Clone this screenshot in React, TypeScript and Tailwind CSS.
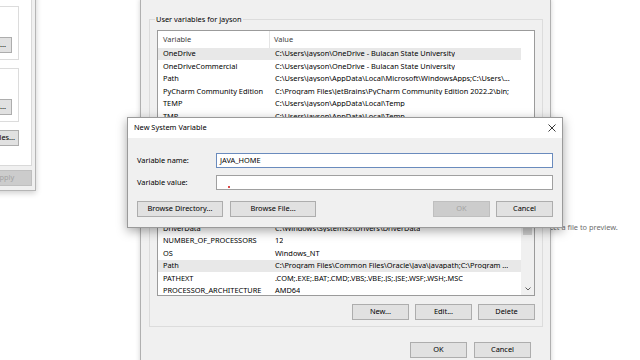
import { FC, ReactNode } from "react";
import clsx from "clsx";

type Row = [string, string];

const userRows: Row[] = [
  ["OneDrive", "C:\\Users\\jayson\\OneDrive - Bulacan State University"],
  ["OneDriveCommercial", "C:\\Users\\jayson\\OneDrive - Bulacan State University"],
  ["Path", "C:\\Users\\jayson\\AppData\\Local\\Microsoft\\WindowsApps;C:\\Users\\..."],
  ["PyCharm Community Edition", "C:\\Program Files\\JetBrains\\PyCharm Community Edition 2022.2\\bin;"],
  ["TEMP", "C:\\Users\\jayson\\AppData\\Local\\Temp"],
  ["TMP", "C:\\Users\\jayson\\AppData\\Local\\Temp"],
];

const systemRows: Row[] = [
  ["ComSpec", "C:\\Windows\\system32\\cmd.exe"],
  ["DriverData", "C:\\Windows\\System32\\Drivers\\DriverData"],
  ["NUMBER_OF_PROCESSORS", "12"],
  ["OS", "Windows_NT"],
  ["Path", "C:\\Program Files\\Common Files\\Oracle\\Java\\javapath;C:\\Program ..."],
  ["PATHEXT", ".COM;.EXE;.BAT;.CMD;.VBS;.VBE;.JS;.JSE;.WSF;.WSH;.MSC"],
  ["PROCESSOR_ARCHITECTURE", "AMD64"],
];

const Btn: FC<{ children: ReactNode; className?: string; disabled?: boolean }> = ({
  children,
  className,
  disabled,
}) => (
  <button
    type="button"
    className={clsx(
      "flex h-[16px] shrink-0 items-center justify-center border leading-none whitespace-nowrap",
      disabled
        ? "border-[#bfbfbf] bg-[#cccccc] text-[#a3a3a3]"
        : "border-[#adadad] bg-[#e1e1e1] text-black",
      className
    )}
  >
    {children}
  </button>
);

const Scrollbar = () => (
  <div className="flex w-[13px] shrink-0 flex-col bg-[#f0f0f0]">
    <div className="h-[13px] shrink-0" />
    <div className="mx-[2px] h-[29px] shrink-0 bg-[#cdcdcd]" />
    <div className="flex-1" />
    <div className="flex h-[13px] shrink-0 items-center justify-center">
      <svg width="6" height="4" viewBox="0 0 6 4">
        <path d="M0.5 0.5 L3 3 L5.5 0.5" fill="none" stroke="#606060" strokeWidth="1" />
      </svg>
    </div>
  </div>
);

const VarList: FC<{ rows: Row[]; selected: number; height: string; scroll?: boolean }> = ({
  rows,
  selected,
  height,
  scroll,
}) => (
  <div className={clsx("flex overflow-hidden border border-[#9b9b9b] bg-white", height)}>
    <div className="flex min-w-0 flex-1 flex-col">
      <div className="flex h-[16.5px] shrink-0 items-stretch text-[#3c3c3c]">
        <div className="flex w-[112px] shrink-0 items-center border-r border-[#e5e5e5] pl-[5px]">
          Variable
        </div>
        <div className="flex items-center pl-[4px]">Value</div>
      </div>
      {rows.map(([k, v], i) => (
        <div
          key={k + i}
          className={clsx(
            "flex h-[12.5px] shrink-0 items-center whitespace-nowrap leading-none",
            i === selected && "bg-[#e8e8e8]"
          )}
        >
          <div className="w-[112px] shrink-0 pl-[5px]">{k}</div>
          <div className="overflow-hidden pl-[5px]">{v}</div>
        </div>
      ))}
    </div>
    {scroll ? <Scrollbar /> : <div className="w-[13px] shrink-0" />}
  </div>
);

const Group: FC<{ title: string; className?: string; children: ReactNode }> = ({
  title,
  className,
  children,
}) => (
  <fieldset className={clsx("border border-[#dcdcdc]", className)}>
    <legend className="ml-[5px] px-[1px] leading-[10px]">{title}</legend>
    <div className="px-[7px] pt-[6px] pb-[6px]">{children}</div>
  </fieldset>
);

export default function App() {
  return (
    <div className="relative h-[360px] w-[640px] overflow-hidden bg-white font-['Noto_Sans','Open_Sans',sans-serif] text-[7.4px] text-black">
      {/* explorer preview text behind everything */}
      <div className="absolute left-[539px] top-[222px] whitespace-nowrap leading-[10px] text-[#6d6d6d]">
        Select a file to preview.
      </div>

      {/* System Properties window, mostly off screen */}
      <div className="absolute left-[-164px] top-[-60px] flex h-[251px] w-[200px] flex-col items-end border border-[#b5b5b5] bg-[#f0f0f0] pb-[4px] pr-[3px] shadow-[0_2px_6px_rgba(0,0,0,0.2)]">
        <div className="flex w-[180px] flex-1 flex-col items-end justify-end border border-[#d9d9d9] bg-white pb-[19px] pr-[12px]">
          <div className="h-[20px] w-[150px] border border-[#dcdcdc]" />
          <div className="mt-[7px] flex h-[54px] w-[150px] flex-col items-end justify-end border border-[#dcdcdc] pb-[6px] pr-[6px]">
            <Btn className="w-[46px]">Settings...</Btn>
          </div>
          <div className="mt-[8px] flex h-[54px] w-[150px] flex-col items-end justify-end border border-[#dcdcdc] pb-[6px] pr-[6px]">
            <Btn className="w-[46px]">Settings...</Btn>
          </div>
          <Btn className="mt-[8px] h-[15px] w-[92px] border-[#7a8aa0]">Environment Variables...</Btn>
        </div>
        <Btn disabled className="mt-[4px] h-[15px] w-[55px]">
          Apply
        </Btn>
      </div>

      {/* Environment Variables window */}
      <div className="absolute left-[140px] top-[-1px] flex h-[380px] w-[411px] flex-col border border-[#b0b0b0] bg-[#f0f0f0] pl-[8px] pr-[7px] pt-[14px] shadow-[0_0_5px_rgba(0,0,0,0.18)]">
        <Group title="User variables for jayson">
          <VarList rows={userRows} selected={0} height="h-[108px]" />
          <div className="mt-[8px] flex justify-end gap-[6px]">
            <Btn className="w-[57px]">New...</Btn>
            <Btn className="w-[57px]">Edit...</Btn>
            <Btn className="w-[57px]">Delete</Btn>
          </div>
        </Group>
        <Group title="System variables" className="mt-[7px]">
          <VarList rows={systemRows} selected={4} height="h-[104px]" scroll />
          <div className="mt-[8px] flex justify-end gap-[6px]">
            <Btn className="w-[57px]">New...</Btn>
            <Btn className="w-[57px]">Edit...</Btn>
            <Btn className="w-[57px]">Delete</Btn>
          </div>
        </Group>
        <div className="mt-[15px] flex justify-end gap-[7px] pr-[12px]">
          <Btn className="w-[57px]">OK</Btn>
          <Btn className="w-[57px]">Cancel</Btn>
        </div>
      </div>

      {/* New System Variable dialog */}
      <div className="absolute left-[127px] top-[117px] flex w-[436px] flex-col border border-[#9a9a9a] bg-[#f0f0f0] shadow-[0_3px_10px_rgba(0,0,0,0.35)]">
        <div className="flex h-[20px] items-center justify-between bg-white pl-[6px] pr-[6px]">
          <span className="leading-none">New System Variable</span>
          <svg width="8" height="8" viewBox="0 0 8 8">
            <path d="M0.5 0.5 L7.5 7.5 M7.5 0.5 L0.5 7.5" stroke="#222" strokeWidth="0.9" />
          </svg>
        </div>
        <div className="flex flex-col px-[9px] pt-[15px] pb-[10px]">
          <div className="flex items-center">
            <div className="w-[79px] shrink-0 leading-none">Variable name:</div>
            <div className="flex h-[15px] flex-1 items-center border border-[#6a8bbd] bg-white pl-[3px] leading-none">
              JAVA_HOME
            </div>
          </div>
          <div className="mt-[7px] flex items-center">
            <div className="w-[79px] shrink-0 leading-none">Variable value:</div>
            <div className="relative h-[15px] flex-1 border border-[#a0a0a0] bg-white">
              <span className="absolute left-[11px] top-[10px] h-[2px] w-[2px] rounded-full bg-[#d01010]" />
            </div>
          </div>
          <div className="mt-[11px] flex items-center">
            <Btn className="w-[86px]">Browse Directory...</Btn>
            <Btn className="ml-[7px] w-[86px]">Browse File...</Btn>
            <div className="flex-1" />
            <Btn disabled className="w-[57px]">
              OK
            </Btn>
            <Btn className="ml-[6px] w-[57px]">Cancel</Btn>
          </div>
        </div>
      </div>
    </div>
  );
}
